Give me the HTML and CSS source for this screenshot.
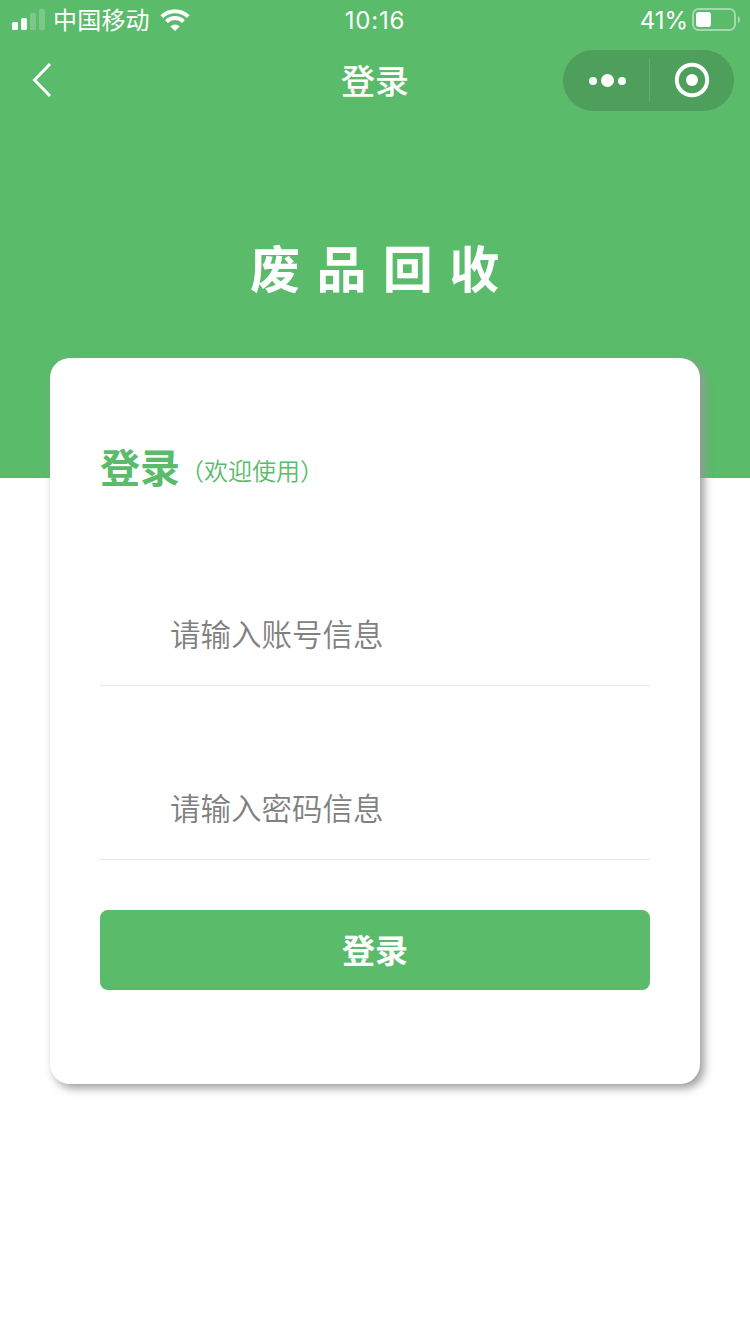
FILE: index.html
```html
<!DOCTYPE html>
<html lang="zh-CN">
<head>
<meta charset="utf-8">
<title>登录</title>
<link rel="stylesheet" href="styles.css">
</head>
<body>
<header class="hero">
  <div class="status">
    <div class="status-left">
      <svg class="signal" width="34" height="22" viewBox="0 0 34 22" fill="#fff">
        <rect x="0" y="13" width="6" height="8" rx="1.5"/>
        <rect x="9" y="9" width="6" height="12" rx="1.5"/>
        <rect x="18" y="4" width="6" height="17" rx="1.5" opacity=".2"/>
        <rect x="27" y="0" width="6" height="21" rx="1.5" opacity=".2"/>
      </svg>
      <span class="carrier">中国移动</span>
      <svg class="wifi" width="30" height="22" viewBox="0 0 30 22">
        <path d="M1.8 7.6a18.7 18.7 0 0 1 26.4 0M6.5 12.6a12 12 0 0 1 17 0" fill="none" stroke="#fff" stroke-width="4"/>
        <path d="M15 22l-4.7-4.6a6.7 6.7 0 0 1 9.4 0z" fill="#fff"/>
      </svg>
    </div>
    <span class="time">10:16</span>
    <div class="status-right">
      <span class="percent">41%</span>
      <svg class="battery" width="48" height="24" viewBox="0 0 48 24">
        <rect x="1" y="1" width="42" height="21" rx="5.5" fill="none" stroke="#fff" stroke-width="2" opacity=".45"/>
        <rect x="4" y="4" width="15" height="15" rx="3" fill="#fff"/>
        <path d="M46 8v7q2-1 2-3.500T46 8z" fill="#fff" opacity=".5"/>
      </svg>
    </div>
  </div>
  <nav class="nav">
    <svg class="back" width="22" height="36" viewBox="0 0 22 36"><path d="M20 2L4.500 18L20 34" fill="none" stroke="#fff" stroke-width="3"/></svg>
    <h1 class="nav-title">登录</h1>
    <div class="capsule">
      <svg class="dots" width="40" height="16" viewBox="0 0 40 16" fill="#fff"><circle cx="5" cy="9" r="4"/><circle cx="19.500" cy="8.500" r="6.500"/><circle cx="34" cy="9" r="4"/></svg>
      <span class="divider"></span>
      <svg class="target" width="36" height="36" viewBox="0 0 36 36"><circle cx="18" cy="18" r="15.200" fill="none" stroke="#fff" stroke-width="4"/><circle cx="18" cy="18" r="6" fill="#fff"/></svg>
    </div>
  </nav>
  <div class="brand">废品回收</div>
</header>
<main class="card">
  <h2 class="heading">登录<small class="welcome">（欢迎使用）</small></h2>
  <input class="field" type="text" placeholder="请输入账号信息">
  <input class="field field-password" type="password" placeholder="请输入密码信息">
  <button class="submit">登录</button>
</main>
</body>
</html>
```

FILE: styles.css
```css
* { box-sizing: border-box; }

body {
  margin: 0;
  height: 1334px;
  background: #fff;
  font-family: "Noto Sans CJK SC", sans-serif;
  overflow: hidden;
}

svg { display: block; flex: none; }

.hero {
  height: 478px;
  background: #5abb6b;
  color: #fff;
}

.status {
  height: 40px;
  display: grid;
  grid-template-columns: 1fr auto 1fr;
  align-items: center;
  padding: 0 10px 0 12px;
  font-size: 24px;
  line-height: 36px;
}

.status-left { display: flex; align-items: center; }
.carrier { margin: -3px 10px 0 7px; letter-spacing: .2px; }
.time { font-family: Inter, sans-serif; letter-spacing: .8px; margin: 1px 2px 0 0; }
.status-right { display: flex; align-items: center; justify-content: flex-end; gap: 4px; }
.percent { font-family: Inter, sans-serif; margin-top: 1px; }

.nav {
  height: 80px;
  display: grid;
  grid-template-columns: 1fr auto 1fr;
  align-items: center;
  padding: 0 15px 0 30px;
}

.nav-title {
  margin: 0 15px 0 0;
  font-size: 34px;
  line-height: 50px;
  font-weight: 500;
}

.capsule {
  justify-self: end;
  width: 173px;
  height: 63px;
  border: 1px solid #66b872;
  border-radius: 32px;
  background: #4d9f5b;
  display: grid;
  grid-template-columns: 86px 1px 1fr;
  align-items: center;
  justify-items: center;
}

.dots { margin-left: 4px; }
.divider { width: 1px; height: 42px; background: #65ae70; }

.brand {
  margin-top: 111px;
  padding-left: 250px;
  font-size: 50px;
  line-height: 70px;
  font-weight: 700;
  letter-spacing: 16.4px;
}

.card {
  width: 650px;
  height: 726px;
  margin: -120px auto 0;
  padding: 78px 50px 0;
  display: flex;
  flex-direction: column;
  position: relative;
  background: #fff;
  border-radius: 20px;
  box-shadow: 4px 4px 10px #999;
}

.heading {
  margin: 0;
  height: 60px;
  display: flex;
  font-size: 40px;
  line-height: 60px;
  font-weight: 700;
  color: #5abb6b;
}

.welcome {
  padding-top: 4px;
  font-size: 24px;
  font-weight: 350;
}

.field {
  width: 550px;
  height: 102px;
  margin: 88px 0 0;
  padding: 0 0 4px 70px;
  border: 0;
  border-bottom: 1px solid #e8e8e8;
  background: none;
  outline: 0;
  font-family: inherit;
  font-size: 30.5px;
  font-weight: 350;
}

.field-password { margin-top: 72px; }
.field::placeholder { color: #808080; opacity: 1; }

.submit {
  height: 80px;
  margin-top: 50px;
  padding: 0 0 3px;
  border: 0;
  border-radius: 8px;
  background: #5abb6b;
  color: #fff;
  font-family: inherit;
  font-size: 33px;
  font-weight: 700;
}
```
